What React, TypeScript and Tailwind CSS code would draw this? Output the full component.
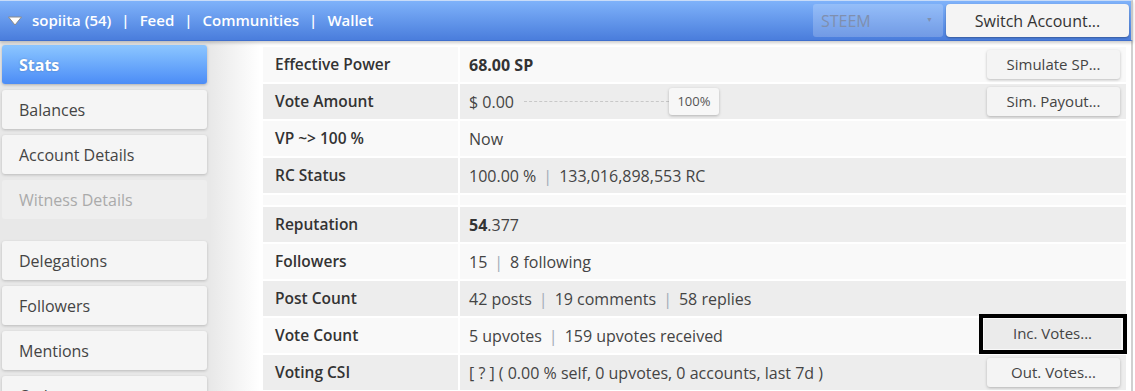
import React from "react";

const Sep = () => <span className="mx-[7px] text-[#a3abb8]">|</span>;

function Btn({ children, boxed }: { children: React.ReactNode; boxed?: boolean }) {
  if (boxed)
    return (
      <div className="-mt-[6px] -mb-[2px] -mr-[7px] border-4 border-black pl-[1px] pr-[2px] py-[1px] bg-[#f9f9f9]">
        <div className="w-[137px] h-[30px] flex items-center justify-center bg-[#ebebeb] text-[15px] text-[#444]">
          {children}
        </div>
      </div>
    );
  return (
    <div className="w-[133px] h-[29px] flex items-center justify-center rounded-[3px] bg-[#f4f4f4] shadow-[0_1px_3px_rgba(0,0,0,0.25)] text-[15px] text-[#444]">
      {children}
    </div>
  );
}

function Row({
  label,
  children,
  dark,
  btn,
  boxed,
}: {
  label: string;
  children?: React.ReactNode;
  dark?: boolean;
  btn?: string;
  boxed?: boolean;
}) {
  const bg = dark ? "bg-[#ededed]" : "bg-[#f9f9f9]";
  return (
    <div className="grid grid-cols-[195px_1fr] gap-[2px] h-[35px] shrink-0">
      <div className={`${bg} flex items-center pl-[12px] font-semibold text-[15.5px] text-[#333]`}>{label}</div>
      <div className={`${bg} flex items-center pl-[9px] pr-[6px] text-[16px] text-[#444]`}>
        <div className="flex-1 flex items-center">{children}</div>
        {btn && <Btn boxed={boxed}>{btn}</Btn>}
      </div>
    </div>
  );
}

function SideBtn({ children, active, disabled, mt }: { children: React.ReactNode; active?: boolean; disabled?: boolean; mt?: string }) {
  let cls = "bg-[#f5f5f5] text-[#444] shadow-[0_1px_3px_rgba(0,0,0,0.2)]";
  if (active) cls = "bg-gradient-to-b from-[#8cc6ff] to-[#4c8cf6] text-white font-bold [text-shadow:0_0_2px_rgba(0,0,0,0.25)] shadow-[0_1px_3px_rgba(0,0,0,0.25)]";
  if (disabled) cls = "bg-[#eeeeee] text-[#aaa]";
  return (
    <div className={`shrink-0 w-[205px] h-[39px] ml-[2px] rounded-[3px] flex items-center pl-[17px] text-[16px] ${cls} ${mt ?? ""}`}>
      {children}
    </div>
  );
}

export default function App() {
  return (
    <div className="w-[1135px] h-[391px] overflow-hidden bg-white font-['Open_Sans',sans-serif] relative">
      {/* header */}
      <div className="w-[1133px] h-[41px] border-t border-[#c9dcf8] border-r-2 border-r-[#c8c8c8] bg-gradient-to-b from-[#7fb2fa] to-[#4a7ddc] border-b border-b-[#3f6fcd] flex items-center shadow-[0_2px_3px_rgba(0,0,0,0.2)] relative z-10">
        <svg width="16" height="12" viewBox="0 0 16 12" className="ml-[7px] mr-[9px]">
          <path d="M1.5 2 L14.5 2 L8 10 Z" fill="#fff" stroke="#8a8a8a" strokeWidth="1" strokeLinejoin="round" />
        </svg>
        <div className="text-white font-semibold text-[15px] flex items-center">
          <span>sopiita (54)</span>
          <span className="mx-[10px]">|</span>
          <span>Feed</span>
          <span className="mx-[10px]">|</span>
          <span>Communities</span>
          <span className="mx-[10px]">|</span>
          <span>Wallet</span>
        </div>
        <div className="ml-auto flex items-center gap-[3px] mr-[2px]">
          <div className="w-[130px] h-[33px] rounded-[3px] bg-white/20 flex items-center pl-[8px] pr-[10px] text-[16px] text-[#7f8fae]">
            <span>STEEM</span>
            <span className="ml-auto text-[7px]">▼</span>
          </div>
          <div className="w-[183px] h-[33px] rounded-[4px] bg-[#f4f4f4] flex items-center justify-center text-[16px] text-[#333] shadow-[0_1px_2px_rgba(0,0,0,0.3)]">
            Switch Account...
          </div>
        </div>
      </div>

      <div className="flex h-[350px]">
        {/* sidebar */}
        <div className="w-[260px] shrink-0 bg-[linear-gradient(to_right,#e8e8e8_0px,#e8e8e8_210px,#ffffff_260px)] pt-[4px] flex flex-col gap-[6px]">
          <SideBtn active>Stats</SideBtn>
          <SideBtn>Balances</SideBtn>
          <SideBtn>Account Details</SideBtn>
          <SideBtn disabled>Witness Details</SideBtn>
          <SideBtn mt="mt-[16px]">Delegations</SideBtn>
          <SideBtn>Followers</SideBtn>
          <SideBtn>Mentions</SideBtn>
          <SideBtn>Orders</SideBtn>
        </div>

        {/* content */}
        <div className="flex-1 border-r-2 border-[#d0d0d0] mr-[2px] pl-[3px] pr-[5px] pt-[6px] flex flex-col gap-[2px]">
          <Row label="Effective Power" btn="Simulate SP...">
            <span className="font-bold text-[#333]">68.00 SP</span>
          </Row>
          <Row label="Vote Amount" dark btn="Sim. Payout...">
            <span>$ 0.00</span>
            <div className="ml-[10px] w-[145px] border-t border-dashed border-[#c8c8c8]" />
            <div className="w-[50px] h-[27px] bg-[#f7f7f7] rounded-[3px] shadow-[0_1px_3px_rgba(0,0,0,0.25)] flex items-center justify-center text-[13px] text-[#555]">
              100%
            </div>
          </Row>
          <Row label="VP ~> 100 %">Now</Row>
          <Row label="RC Status" dark>
            <span>100.00 %</span>
            <Sep />
            <span>133,016,898,553 RC</span>
          </Row>
          <div className="grid grid-cols-[195px_1fr] gap-[2px] h-[10px] shrink-0">
            <div className="bg-[#f9f9f9]" />
            <div className="bg-[#f9f9f9]" />
          </div>
          <Row label="Reputation" dark>
            <span className="font-bold text-[#333]">54</span>
            <span>.377</span>
          </Row>
          <Row label="Followers">
            <span>15</span>
            <Sep />
            <span>8 following</span>
          </Row>
          <Row label="Post Count" dark>
            <span>42 posts</span>
            <Sep />
            <span>19 comments</span>
            <Sep />
            <span>58 replies</span>
          </Row>
          <Row label="Vote Count" btn="Inc. Votes..." boxed>
            <span>5 upvotes</span>
            <Sep />
            <span>159 upvotes received</span>
          </Row>
          <Row label="Voting CSI" dark btn="Out. Votes...">
            <span>[ ? ] ( 0.00 % self, 0 upvotes, 0 accounts, last 7d )</span>
          </Row>
        </div>
      </div>
    </div>
  );
}
